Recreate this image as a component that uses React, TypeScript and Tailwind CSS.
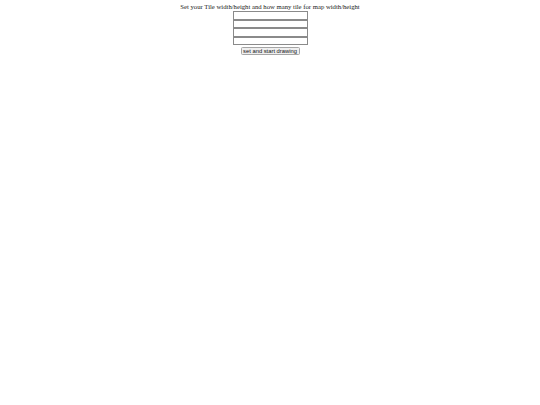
export default function App() {
  const fields = ["tileWidth", "tileHeight", "mapWidth", "mapHeight"];
  return (
    <div className="min-h-[405px] bg-white pt-[3px] text-center font-['Liberation_Serif',serif] text-[6.7px] leading-[8.3px] text-[#222]">
      <div>Set your Tile width/height and how many tile for map width/height</div>
      <div className="flex flex-col items-center">
        {fields.map((f) => (
          <input
            key={f}
            name={f}
            type="text"
            className="box-border h-[8.5px] w-[75px] border-[0.8px] border-[#8a8a8a] bg-white"
          />
        ))}
        <button className="mt-[2px] box-border h-[8px] w-[59px] rounded-[1.5px] border-[0.8px] border-[#a5a5a5] bg-[#efefef] font-['Liberation_Sans',sans-serif] text-[5.8px] leading-[6px] text-[#111]">
          set and start drawing
        </button>
      </div>
    </div>
  );
}
